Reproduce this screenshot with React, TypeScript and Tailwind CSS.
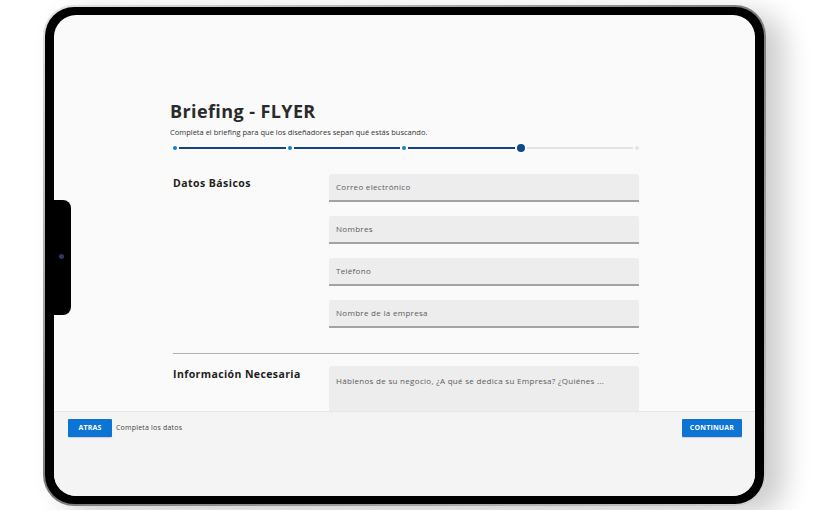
import React from "react";

const font = { fontFamily: '"Open Sans", "Liberation Sans", sans-serif' };

function Input({ label }: { label: string }) {
  return (
    <div className="h-[28px] bg-[#ededed] border-b-[2px] border-[#a3a3a3] rounded-t-[2px] flex items-center pl-[7px] text-[8px] tracking-[0.3px] text-[#5c5c5c]">
      {label}
    </div>
  );
}

function Progress() {
  const Dot = () => <div className="w-[4px] h-[4px] rounded-full bg-[#1081c9] shrink-0" />;
  const Seg = ({ done }: { done: boolean }) => (
    <div className={done ? "flex-1 mx-[2px] h-[2px] bg-[#16427f]" : "flex-1 mx-[2px] h-[1.5px] bg-[#e2e2e2]"} />
  );
  return (
    <div className="flex items-center h-[8px] pl-[3px]">
      <Dot />
      <Seg done />
      <Dot />
      <Seg done />
      <Dot />
      <Seg done />
      <div className="w-[8px] h-[8px] rounded-full bg-[#0c4a88] shrink-0" />
      <Seg done={false} />
      <div className="w-[4px] h-[4px] rounded-full bg-[#e4e4e4] shrink-0" />
    </div>
  );
}

export default function App() {
  return (
    <div className="w-[822px] h-[510px] bg-white overflow-hidden pl-[43px] pt-[5px]" style={font}>
      <div className="w-[723px] h-[501px] rounded-[31px] p-[2px] bg-gradient-to-br from-[#e6e6e6] via-[#7a7a7a] to-[#cfcfcf] shadow-[18px_8px_28px_rgba(0,0,0,0.2)]">
        <div className="w-full h-full rounded-[29px] bg-black px-[9px] py-[8px]">
          <div className="relative w-full h-full rounded-[22px] overflow-hidden bg-[#fafafa] flex flex-col">
            {/* notch */}
            <div className="absolute left-0 top-[185px] w-[17px] h-[115px] bg-black rounded-r-[8px] z-10">
              <div className="absolute left-[5px] top-[54px] w-[5px] h-[5px] rounded-full bg-[#2c3862]" />
            </div>

            <div className="h-[396px] overflow-hidden pl-[116px] pr-[116px] pt-[85px]">
              <div className="text-[18px] leading-[22px] font-bold text-[#2a2a2a] tracking-[0.4px]">Briefing - FLYER</div>
              <div className="mt-[5px] text-[7.5px] leading-[10px] text-[#333]">
                Completa el briefing para que los diseñadores sepan qué estás buscando.
              </div>
              <div className="mt-[7px]">
                <Progress />
              </div>

              <div className="mt-[22px] flex">
                <div className="w-[159px] pl-[3px] pt-[2px] text-[10.5px] leading-[14px] font-bold tracking-[0.45px] text-[#1e1e1e]">Datos Básicos</div>
                <div className="flex-1 flex flex-col gap-[14px]">
                  <Input label="Correo electrónico" />
                  <Input label="Nombres" />
                  <Input label="Teléfono" />
                  <Input label="Nombre de la empresa" />
                </div>
              </div>

              <div className="mt-[25px] ml-[3px] h-[1px] bg-[#b0b0b0]" />

              <div className="mt-[12px] flex">
                <div className="w-[159px] pl-[3px] pt-[1px] text-[10.5px] leading-[14px] font-bold tracking-[0.4px] text-[#1e1e1e]">Información Necesaria</div>
                <div className="flex-1 h-[70px] bg-[#ededed] rounded-t-[2px] pl-[7px] pt-[9px] text-[8px] tracking-[0.3px] text-[#5c5c5c]">
                  Háblenos de su negocio, ¿A qué se dedica su Empresa? ¿Quiénes ...
                </div>
              </div>
            </div>

            <div className="flex-1 bg-[#f4f4f4] border-t border-[#e6e6e6] pl-[14px] pr-[13px] pt-[7px]">
              <div className="flex items-center">
                <div className="w-[44px] h-[18px] bg-[#0b74d5] rounded-[1px] flex items-center justify-center text-white text-[7px] font-bold tracking-[0.2px] shadow-[0_1px_1px_rgba(0,0,0,0.15)]">
                  ATRAS
                </div>
                <div className="ml-[4px] text-[7px] tracking-[0.2px] text-[#444]">Completa los datos</div>
                <div className="ml-auto w-[60px] h-[18px] bg-[#0b74d5] rounded-[1px] flex items-center justify-center text-white text-[7px] font-bold tracking-[0.2px] shadow-[0_1px_1px_rgba(0,0,0,0.15)]">
                  CONTINUAR
                </div>
              </div>
            </div>
          </div>
        </div>
      </div>
    </div>
  );
}
